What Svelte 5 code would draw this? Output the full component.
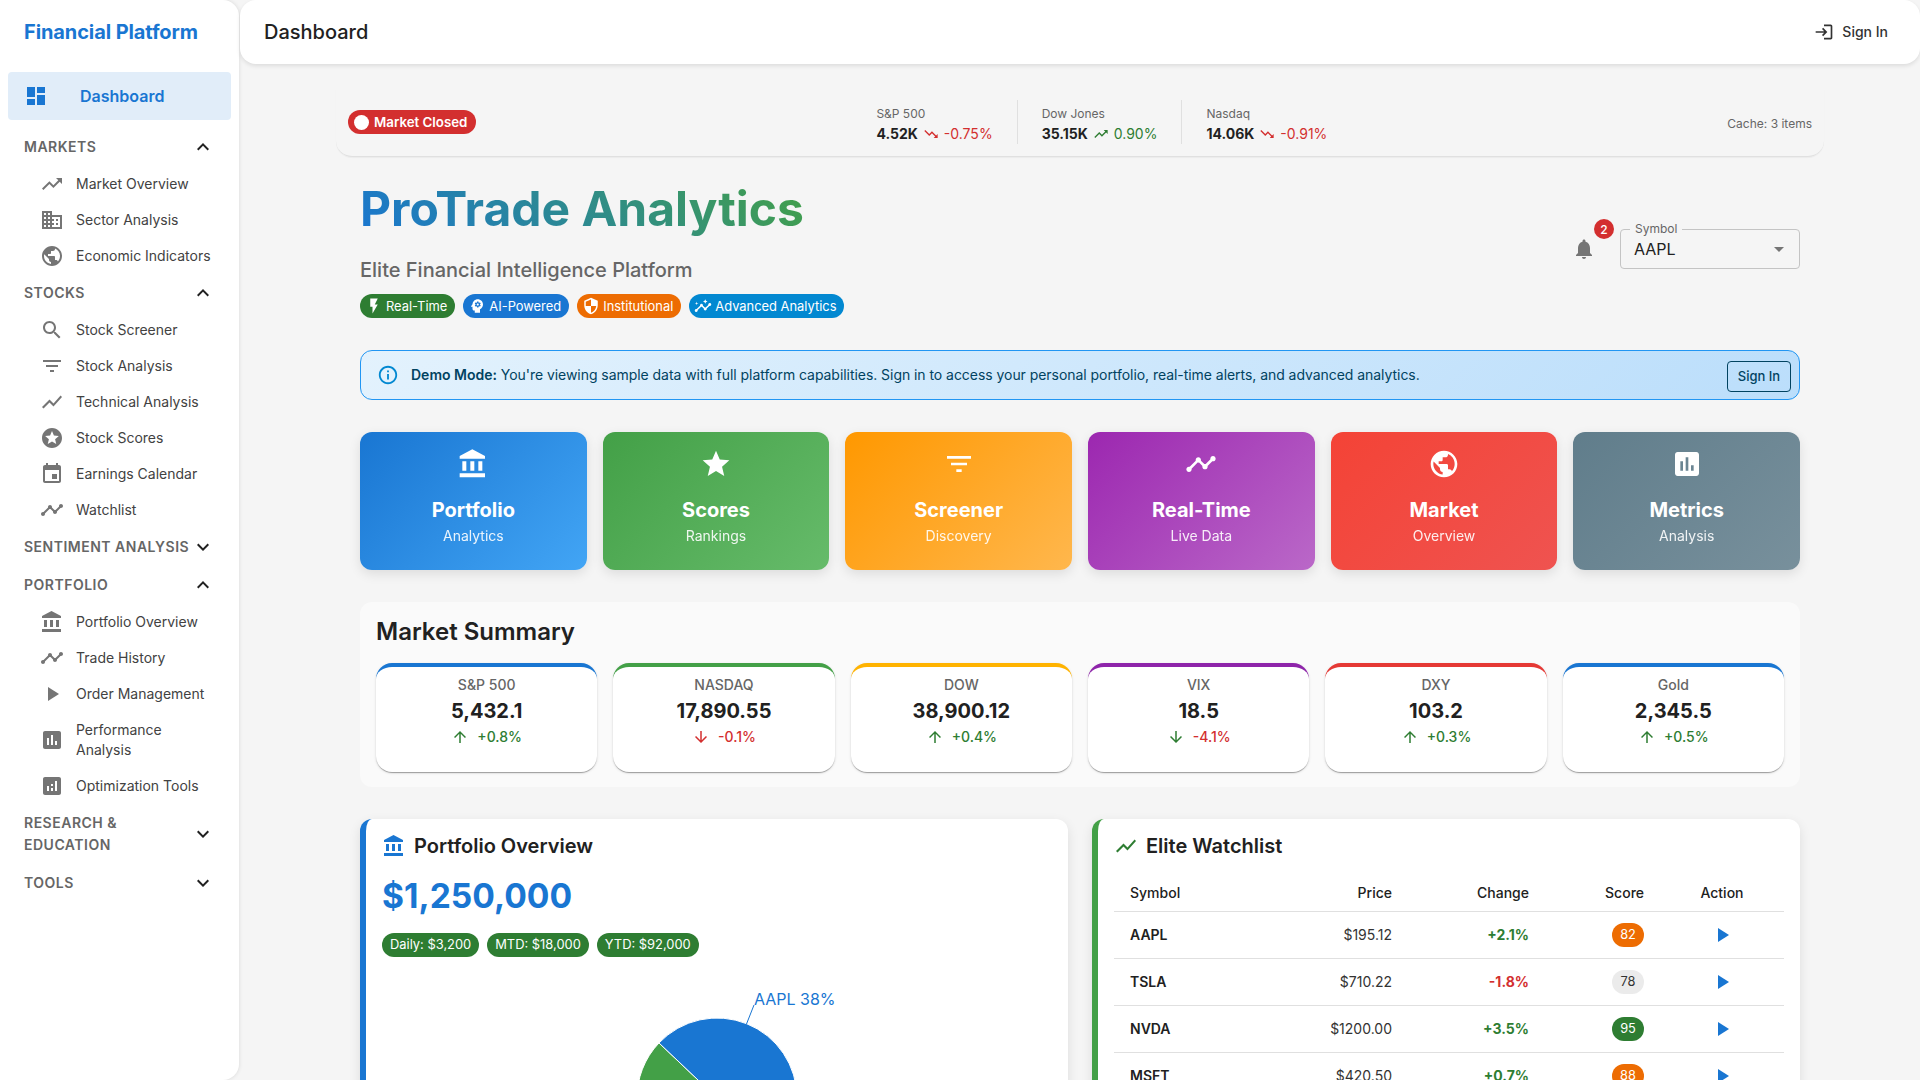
<script>
const P = {
  dashboard: 'M3 13h8V3H3v10zm0 8h8v-6H3v6zm10 0h8V11h-8v10zm0-18v6h8V3h-8z',
  up: 'M16 6l2.29 2.29-4.88 4.88-4-4L2 16.59 3.41 18l6-6 4 4 6.3-6.29L22 12V6z',
  down: 'M16 18l2.29-2.29-4.88-4.88-4 4L2 7.41 3.41 6l6 6 4-4 6.3 6.29L22 12v6z',
  business: 'M12 7V3H2v18h20V7H12zM6 19H4v-2h2v2zm0-4H4v-2h2v2zm0-4H4V9h2v2zm0-4H4V5h2v2zm4 12H8v-2h2v2zm0-4H8v-2h2v2zm0-4H8V9h2v2zm0-4H8V5h2v2zm10 12h-8v-2h2v-2h-2v-2h2v-2h-2V9h8v10zm-2-8h-2v2h2v-2zm0 4h-2v2h2v-2z',
  public: 'M12 2C6.48 2 2 6.48 2 12s4.48 10 10 10 10-4.48 10-10S17.52 2 12 2zm-1 17.93c-3.95-.49-7-3.85-7-7.93 0-.62.08-1.21.21-1.79L9 15v1c0 1.1.9 2 2 2v1.93zm6.9-2.54c-.26-.81-1-1.39-1.9-1.39h-1v-3c0-.55-.45-1-1-1H8v-2h2c.55 0 1-.45 1-1V7h2c1.1 0 2-.9 2-2v-.41c2.93 1.19 5 4.06 5 7.41 0 2.08-.8 3.97-2.1 5.39z',
  search: 'M15.5 14h-.79l-.28-.27C15.41 12.59 16 11.11 16 9.5 16 5.91 13.09 3 9.5 3S3 5.91 3 9.5 5.91 16 9.5 16c1.61 0 3.09-.59 4.23-1.57l.27.28v.79l5 4.99L20.49 19l-4.99-5zm-6 0C7.01 14 5 11.99 5 9.5S7.01 5 9.5 5 14 7.01 14 9.5 11.99 14 9.5 14z',
  filter: 'M10 18h4v-2h-4v2zM3 6v2h18V6H3zm3 7h12v-2H6v2z',
  chart: 'M3.5 18.49l6-6.01 4 4L22 6.92l-1.41-1.41-7.09 7.97-4-4L2 16.99z',
  stars: 'M11.99 2C6.47 2 2 6.48 2 12s4.47 10 9.99 10C17.52 22 22 17.52 22 12S17.52 2 11.99 2zm4.24 16L12 15.45 7.77 18l1.12-4.81-3.73-3.23 4.92-.42L12 5l1.92 4.53 4.92.42-3.73 3.23L16.23 18z',
  event: 'M17 12h-5v5h5v-5zM16 1v2H8V1H6v2H5c-1.11 0-1.99.9-1.99 2L3 19c0 1.1.89 2 2 2h14c1.1 0 2-.9 2-2V5c0-1.1-.9-2-2-2h-1V1h-2zm3 18H5V8h14v11z',
  timeline: 'M23 8c0 1.1-.9 2-2 2-.18 0-.35-.02-.51-.07l-3.56 3.55c.05.16.07.34.07.52 0 1.1-.9 2-2 2s-2-.9-2-2c0-.18.02-.36.07-.52l-2.55-2.55c-.16.05-.34.07-.52.07s-.36-.02-.52-.07l-4.55 4.56c.05.16.07.33.07.51 0 1.1-.9 2-2 2s-2-.9-2-2 .9-2 2-2c.18 0 .35.02.51.07l4.56-4.55C8.02 9.36 8 9.18 8 9c0-1.1.9-2 2-2s2 .9 2 2c0 .18-.02.36-.07.52l2.55 2.55c.16-.05.34-.07.52-.07s.36.02.52.07l3.55-3.56C19.02 8.35 19 8.18 19 8c0-1.1.9-2 2-2s2 .9 2 2z',
  bank: 'M4 10v7h3v-7H4zm6 0v7h3v-7h-3zM2 22h19v-3H2v3zm14-12v7h3v-7h-3zm-4.5-9L2 6v2h19V6l-9.5-5z',
  play: 'M8 5v14l11-7z',
  assess: 'M19 3H5c-1.1 0-2 .9-2 2v14c0 1.1.9 2 2 2h14c1.1 0 2-.9 2-2V5c0-1.1-.9-2-2-2zM9 17H7v-7h2v7zm4 0h-2V7h2v10zm4 0h-2v-4h2v4z',
  analytics: 'M19 3H5c-1.1 0-2 .9-2 2v14c0 1.1.9 2 2 2h14c1.1 0 2-.9 2-2V5c0-1.1-.9-2-2-2zM9 17H7v-5h2v5zm4 0h-2v-3h2v3zm0-5h-2v-2h2v2zm4 5h-2V7h2v10z',
  less: 'M12 8l-6 6 1.41 1.41L12 10.83l4.59 4.58L18 14z',
  more: 'M16.59 8.59L12 13.17 7.41 8.59 6 10l6 6 6-6z',
  login: 'M11 7L9.6 8.4l2.6 2.6H2v2h10.2l-2.6 2.6L11 17l5-5-5-5zm9 12h-8v2h8c1.1 0 2-.9 2-2V5c0-1.1-.9-2-2-2h-8v2h8v14z',
  bell: 'M12 22c1.1 0 2-.9 2-2h-4c0 1.1.89 2 2 2zm6-6v-5c0-3.07-1.64-5.64-4.5-6.32V4c0-.83-.67-1.5-1.5-1.5s-1.5.67-1.5 1.5v.68C7.63 5.36 6 7.92 6 11v5l-2 2v1h16v-1l-2-2z',
  bolt: 'M7 2v11h3v9l7-12h-4l4-8z',
  psych: 'M13 8.57c-.79 0-1.43.64-1.43 1.43s.64 1.43 1.43 1.43 1.43-.64 1.43-1.43-.64-1.43-1.43-1.43zM13 3C9.25 3 6.2 5.94 6.02 9.64L4.1 12.2c-.25.33-.01.8.4.8H6v3c0 1.1.9 2 2 2h1v3h7v-4.68c2.36-1.12 4-3.53 4-6.32 0-3.87-3.13-7-7-7zm3 7c0 .13-.01.26-.02.39l.83.66c.08.06.1.16.05.25l-.8 1.39c-.05.09-.16.12-.24.09l-.99-.4c-.21.16-.43.29-.67.39L14 13.83c-.01.1-.1.17-.2.17h-1.6c-.1 0-.18-.07-.2-.17l-.15-1.06c-.25-.1-.47-.23-.68-.39l-.99.4c-.09.03-.2 0-.25-.09l-.8-1.39c-.05-.08-.03-.19.05-.25l.84-.66c-.01-.13-.02-.26-.02-.39s.02-.27.04-.39l-.85-.66c-.08-.06-.1-.16-.05-.26l.8-1.38c.05-.09.15-.12.24-.09l1 .4c.2-.15.43-.29.67-.39L12 6.17c.02-.1.1-.17.2-.17h1.6c.1 0 .18.07.2.17l.15 1.06c.24.1.46.23.67.39l1-.4c.09-.03.2 0 .24.09l.8 1.38c.05.09.03.2-.05.26l-.85.66c.03.12.04.25.04.39z',
  shield: 'M12 1L3 5v6c0 5.55 3.84 10.74 9 12 5.16-1.26 9-6.45 9-12V5l-9-4zm0 10.99h7c-.53 4.12-3.28 7.79-7 8.94V12H5V6.3l7-3.11v8.8z',
  insights: 'M21 8c-1.45 0-2.26 1.44-1.93 2.51l-3.55 3.56c-.3-.09-.74-.09-1.04 0l-2.55-2.55C12.27 10.45 11.46 9 10 9c-1.45 0-2.27 1.44-1.93 2.52l-4.56 4.55C2.44 15.74 1 16.55 1 18c0 1.1.9 2 2 2 1.45 0 2.26-1.44 1.93-2.51l4.55-4.56c.3.09.74.09 1.04 0l2.55 2.55C12.73 16.55 13.54 18 15 18c1.45 0 2.27-1.44 1.93-2.52l3.56-3.55c1.07.33 2.51-.48 2.51-1.93 0-1.1-.9-2-2-2zM15 9l.94-2.07L18 6l-2.06-.93L15 3l-.92 2.07L12 6l2.08.93zM3.5 11 4 9l2-.5L4 8l-.5-2L3 8l-2 .5L3 9z',
  star: 'M12 17.27L18.18 21l-1.64-7.03L22 9.24l-7.19-.61L12 2 9.19 8.63 2 9.24l5.46 4.73L5.82 21z',
  info: 'M11 7h2v2h-2zm0 4h2v6h-2zm1-9C6.48 2 2 6.48 2 12s4.48 10 10 10 10-4.48 10-10S17.52 2 12 2zm0 18c-4.41 0-8-3.59-8-8s3.59-8 8-8 8 3.59 8 8-3.59 8-8 8z',
  arrowUp: 'M4 12l1.41 1.41L11 7.83V20h2V7.83l5.58 5.59L20 12l-8-8-8 8z',
  arrowDown: 'M20 12l-1.41-1.41L13 16.17V4h-2v12.17l-5.58-5.59L4 12l8 8 8-8z',
  drop: 'M7 10l5 5 5-5z'
};

const nav = [
  { title: 'MARKETS', open: true, items: [['up','Market Overview'],['business','Sector Analysis'],['public','Economic Indicators']] },
  { title: 'STOCKS', open: true, items: [['search','Stock Screener'],['filter','Stock Analysis'],['chart','Technical Analysis'],['stars','Stock Scores'],['event','Earnings Calendar'],['timeline','Watchlist']] },
  { title: 'SENTIMENT ANALYSIS', open: false, items: [] },
  { title: 'PORTFOLIO', open: true, items: [['bank','Portfolio Overview'],['timeline','Trade History'],['play','Order Management'],['assess','Performance Analysis'],['analytics','Optimization Tools']] },
  { title: 'RESEARCH & EDUCATION', open: false, items: [] },
  { title: 'TOOLS', open: false, items: [] }
];

const indices = [
  { name: 'S&P 500', value: '4.52K', icon: 'down', change: '-0.75%', cls: 'neg' },
  { name: 'Dow Jones', value: '35.15K', icon: 'up', change: '0.90%', cls: 'pos' },
  { name: 'Nasdaq', value: '14.06K', icon: 'down', change: '-0.91%', cls: 'neg' }
];

const tags = [
  { icon: 'bolt', label: 'Real-Time', cls: 'c-green' },
  { icon: 'psych', label: 'AI-Powered', cls: 'c-blue' },
  { icon: 'shield', label: 'Institutional', cls: 'c-orange' },
  { icon: 'insights', label: 'Advanced Analytics', cls: 'c-sky' }
];

const quick = [
  { icon: 'bank', title: 'Portfolio', sub: 'Analytics', cls: 'q-blue' },
  { icon: 'star', title: 'Scores', sub: 'Rankings', cls: 'q-green' },
  { icon: 'filter', title: 'Screener', sub: 'Discovery', cls: 'q-orange' },
  { icon: 'timeline', title: 'Real-Time', sub: 'Live Data', cls: 'q-purple' },
  { icon: 'public', title: 'Market', sub: 'Overview', cls: 'q-red' },
  { icon: 'assess', title: 'Metrics', sub: 'Analysis', cls: 'q-grey' }
];

const summary = [
  { name: 'S&P 500', value: '5,432.1', arrow: 'arrowUp', arrowCls: 'pos', change: '+0.8%', cls: 'pos', top: 't-blue' },
  { name: 'NASDAQ', value: '17,890.55', arrow: 'arrowDown', arrowCls: 'neg', change: '-0.1%', cls: 'neg', top: 't-green' },
  { name: 'DOW', value: '38,900.12', arrow: 'arrowUp', arrowCls: 'pos', change: '+0.4%', cls: 'pos', top: 't-amber' },
  { name: 'VIX', value: '18.5', arrow: 'arrowDown', arrowCls: 'pos', change: '-4.1%', cls: 'neg', top: 't-purple' },
  { name: 'DXY', value: '103.2', arrow: 'arrowUp', arrowCls: 'pos', change: '+0.3%', cls: 'pos', top: 't-red' },
  { name: 'Gold', value: '2,345.5', arrow: 'arrowUp', arrowCls: 'pos', change: '+0.5%', cls: 'pos', top: 't-blue' }
];

const watch = [
  { s: 'AAPL', p: '$195.12', c: '+2.1%', cls: 'pos', score: 82, sc: 's-orange' },
  { s: 'TSLA', p: '$710.22', c: '-1.8%', cls: 'neg', score: 78, sc: 's-grey' },
  { s: 'NVDA', p: '$1200.00', c: '+3.5%', cls: 'pos', score: 95, sc: 's-green' },
  { s: 'MSFT', p: '$420.50', c: '+0.7%', cls: 'pos', score: 88, sc: 's-orange' }
];

const pnl = ['Daily: $3,200', 'MTD: $18,000', 'YTD: $92,000'];

const cx = 335, cy = 125, r = 80;
function pt(deg) {
  const a = (deg * Math.PI) / 180;
  return `${(cx + r * Math.sin(a)).toFixed(2)} ${(cy - r * Math.cos(a)).toFixed(2)}`;
}
function slice(a, b) {
  const large = b - a > 180 ? 1 : 0;
  return `M${cx} ${cy} L${pt(a)} A${r} ${r} 0 ${large} 1 ${pt(b)} Z`;
}
const blue = slice(-46.5, 90.3);
const green = slice(-136, -46.5);
const amber = slice(90.3, 224);
</script>

{#snippet icon(name, size = 24, cls = '')}
  <svg class="ic {cls}" width={size} height={size} viewBox="0 0 24 24" aria-hidden="true"><path d={P[name]} /></svg>
{/snippet}

<div class="shell">
  <aside class="sidebar">
    <div class="brand">Financial Platform</div>
    <div class="active">
      <span class="active-icon">{@render icon('dashboard')}</span>
      <span>Dashboard</span>
    </div>
    {#each nav as group}
      <div class="group-head">
        <span class="group-title">{group.title}</span>
        <span class="chev">{@render icon(group.open ? 'less' : 'more')}</span>
      </div>
      {#each group.items as item}
        <div class="item">
          <span class="item-icon">{@render icon(item[0])}</span>
          <span class="item-text">{item[1]}</span>
        </div>
      {/each}
    {/each}
  </aside>

  <div class="right">
    <header class="appbar">
      <h1 class="page-title">Dashboard</h1>
      <div class="signin">{@render icon('login', 20)}<span>Sign In</span></div>
    </header>

    <main class="main">
      <div class="page">
        <section class="status">
          <div class="closed"><span class="dot"></span>Market Closed</div>
          <div class="indices">
            {#each indices as x}
              <div class="index">
                <div class="index-name">{x.name}</div>
                <div class="index-row">
                  <b>{x.value}</b>
                  <span class={x.cls}>{@render icon(x.icon, 16)}</span>
                  <span class={x.cls}>{x.change}</span>
                </div>
              </div>
            {/each}
          </div>
          <div class="cache">Cache: 3 items</div>
        </section>

        <section class="hero">
          <div class="hero-left">
            <h2 class="brand-title">ProTrade Analytics</h2>
            <div class="tagline">Elite Financial Intelligence Platform</div>
            <div class="tags">
              {#each tags as t}
                <span class="tag {t.cls}">{@render icon(t.icon, 18)}{t.label}</span>
              {/each}
            </div>
          </div>
          <div class="hero-right">
            <div class="bell">
              {@render icon('bell')}
              <span class="badge">2</span>
            </div>
            <div class="select">
              <span class="select-label">Symbol</span>
              <span>AAPL</span>
              {@render icon('drop')}
            </div>
          </div>
        </section>

        <section class="alert">
          <span class="alert-icon">{@render icon('info', 22)}</span>
          <div class="alert-text"><b>Demo Mode:</b> You're viewing sample data with full platform capabilities. Sign in to access your personal portfolio, real-time alerts, and advanced analytics.</div>
          <button class="alert-btn">Sign In</button>
        </section>

        <section class="quick">
          {#each quick as q}
            <div class="q {q.cls}">
              {@render icon(q.icon, 32)}
              <div class="q-title">{q.title}</div>
              <div class="q-sub">{q.sub}</div>
            </div>
          {/each}
        </section>

        <section class="summary">
          <h3>Market Summary</h3>
          <div class="summary-grid">
            {#each summary as m}
              <div class="m {m.top}">
                <div class="m-name">{m.name}</div>
                <div class="m-value">{m.value}</div>
                <div class="m-change">
                  <span class={m.arrowCls}>{@render icon(m.arrow, 18)}</span>
                  <span class={m.cls}>{m.change}</span>
                </div>
              </div>
            {/each}
          </div>
        </section>

        <section class="columns">
          <div class="card card-blue">
            <div class="card-head">
              <span class="blue-ic">{@render icon('bank')}</span>
              <h3>Portfolio Overview</h3>
            </div>
            <div class="total">$1,250,000</div>
            <div class="pnl">
              {#each pnl as p}<span class="pnl-chip">{p}</span>{/each}
            </div>
            <svg class="pie" width="670" height="300" viewBox="0 0 670 300">
              <path d={amber} fill="#ffb300" stroke="#fff" />
              <path d={green} fill="#43a047" stroke="#fff" />
              <path d={blue} fill="#1976d2" stroke="#fff" />
              <path d="M364.5 51 L372 32" fill="none" stroke="#1976d2" />
              <text x="372" y="32" class="pie-label">AAPL 38%</text>
            </svg>
          </div>

          <div class="card card-green">
            <div class="card-head">
              <span class="pos">{@render icon('chart')}</span>
              <h3>Elite Watchlist</h3>
            </div>
            <table>
              <thead>
                <tr>
                  <th class="col-sym">Symbol</th>
                  <th class="col-price">Price</th>
                  <th class="col-chg">Change</th>
                  <th class="col-score">Score</th>
                  <th class="col-act">Action</th>
                </tr>
              </thead>
              <tbody>
                {#each watch as w}
                  <tr>
                    <td class="col-sym sym">{w.s}</td>
                    <td class="col-price">{w.p}</td>
                    <td class="col-chg chg {w.cls}">{w.c}</td>
                    <td class="col-score"><span class="score {w.sc}">{w.score}</span></td>
                    <td class="col-act"><span class="act">{@render icon('play')}</span></td>
                  </tr>
                {/each}
              </tbody>
            </table>
          </div>
        </section>
      </div>
    </main>
  </div>
</div>

<style>
  :global(html), :global(body) { margin: 0; height: 100%; overflow: hidden; }
  :global(body) { background: #f5f5f5; font-family: Inter, "Liberation Sans", sans-serif; color: #212121; }
  h1, h2, h3 { margin: 0; }
  .ic { display: block; fill: currentColor; flex: none; }
  .pos { color: #2e7d32; }
  .neg { color: #d32f2f; }

  .shell { display: flex; height: 1080px; overflow: hidden; }
  .sidebar { width: 239px; flex: none; background: #fff; border-radius: 0 16px 16px 0; box-shadow: 0 0 4px rgba(0,0,0,.12); height: 100%; }
  .brand { height: 64px; display: flex; align-items: center; padding-left: 24px; font-size: 20px; font-weight: 700; letter-spacing: -.1px; color: #1976d2; }
  .active { margin: 8px 8px 8px; height: 48px; border-radius: 4px; background: #e1edf9; display: flex; align-items: center; padding-left: 16px; color: #1976d2; font-size: 16px; font-weight: 600; }
  .active-icon { width: 56px; }
  .group-head { display: flex; align-items: center; justify-content: space-between; padding: 8px 24px; }
  .group-title { font-size: 14px; line-height: 22px; font-weight: 600; letter-spacing: .5px; color: #666; }
  .chev { color: #212121; height: 22px; display: flex; align-items: center; flex: none; }
  .item { display: flex; align-items: center; padding: 8px 24px 8px 40px; color: #424242; font-size: 14px; line-height: 20px; }
  .item-icon { width: 36px; height: 20px; display: flex; align-items: center; flex: none; color: #757575; }

  .right { flex: 1; min-width: 0; padding-left: 1px; }
  .appbar { height: 64px; background: #fff; border-radius: 16px; box-shadow: 0 2px 4px rgba(0,0,0,.1); display: flex; align-items: center; justify-content: space-between; padding: 0 32px 0 24px; }
  .page-title { font-size: 20px; font-weight: 500; }
  .signin { display: flex; align-items: center; gap: 8px; font-size: 14px; line-height: 18px; font-weight: 500; color: #333; }
  .signin span { margin-top: -1px; }

  .main { height: 1016px; overflow: hidden; padding-top: 24px; box-sizing: border-box; }
  .page { width: 1440px; margin: 0 auto; }

  .status { margin: 0 -24px 23px; padding: 12px; border-bottom: 1px solid #e0e0e0; border-radius: 0 0 16px 16px; display: flex; align-items: center; justify-content: space-between; box-shadow: 0 1px 1px rgba(0,0,0,.04); }
  .closed { height: 24px; padding: 0 9px 0 6px; border-radius: 12px; background: #d32f2f; color: #fff; display: flex; align-items: center; gap: 5px; font-size: 13.3px; font-weight: 600; }
  .dot { width: 15px; height: 15px; border-radius: 50%; background: #fff; }
  .indices { display: flex; }
  .index { padding: 0 24px; border-left: 1px solid #e0e0e0; height: 44px; box-sizing: border-box; }
  .index:first-child { border-left: 0; padding-left: 0; }
  .index:last-child { padding-right: 0; }
  .index-name { font-size: 12px; line-height: 20px; margin-top: 4px; color: #666; }
  .index-row { display: flex; align-items: center; gap: 5px; font-size: 14px; line-height: 20px; }
  .index-row b { font-weight: 700; }
  .cache { font-size: 12px; color: #666; margin-top: 3px; }

  .hero { display: flex; justify-content: space-between; align-items: center; margin-bottom: 32px; }
  .brand-title { font-size: 48px; line-height: 58px; font-weight: 700; background: linear-gradient(45deg, #1976d2, #43a047); -webkit-background-clip: text; background-clip: text; color: transparent; width: fit-content; }
  .tagline { margin-top: 16px; font-size: 20px; line-height: 32px; color: #666; font-weight: 500; }
  .tags { display: flex; gap: 8px; margin-top: 8px; }
  .tag { height: 24px; box-sizing: border-box; border-radius: 12px; display: flex; align-items: center; gap: 3px; padding: 0 8px 0 5px; color: #fff; font-size: 12.9px; font-weight: 400; }
  .c-green { background: #2e7d32; }
  .c-blue { background: #1976d2; }
  .c-orange { background: #ed6c02; }
  .c-sky { background: #0288d1; }
  .hero-right { display: flex; align-items: center; gap: 24px; }
  .bell { position: relative; color: #757575; }
  .badge { position: absolute; left: 22px; top: -18px; width: 20px; height: 20px; border-radius: 50%; background: #d32f2f; color: #fff; font-size: 12px; font-weight: 500; display: flex; align-items: center; justify-content: center; }
  .select { position: relative; width: 180px; height: 40px; box-sizing: border-box; border: 1px solid #c4c4c4; border-radius: 4px; display: flex; align-items: center; justify-content: space-between; padding: 0 8px 0 13px; font-size: 16px; color: #212121; }
  .select .ic { color: #757575; }
  .select-label { position: absolute; left: 9px; top: -8px; padding: 0 5px; background: #f5f5f5; font-size: 12px; line-height: 14px; color: #666; }

  .alert { height: 50px; box-sizing: border-box; border: 1px solid #2196f3; border-radius: 12px; background: linear-gradient(135deg, #e3f2fd, #bbdefb); display: flex; align-items: center; padding: 0 8px 0 16px; color: #014361; margin-bottom: 32px; }
  .alert-icon { color: #0288d1; margin-right: 12px; }
  .alert-text { flex: 1; font-size: 14px; letter-spacing: -0.05px; margin-top: -2px; }
  .alert-text b { font-weight: 600; letter-spacing: 0; }
  .alert-btn { height: 31px; width: 64px; margin-top: 2px; border: 1px solid #014361; border-radius: 4px; background: transparent; color: #014361; font: 500 13px Inter, sans-serif; padding: 0; }

  .quick { display: grid; grid-template-columns: repeat(6, 1fr); gap: 16px; margin-bottom: 32px; }
  .q { height: 138px; box-sizing: border-box; padding-top: 16px; border-radius: 12px; color: #fff; display: flex; flex-direction: column; align-items: center; box-shadow: 0 4px 12px rgba(0,0,0,.1); }
  .q-title { margin-top: 14px; font-size: 20px; line-height: 32px; font-weight: 700; }
  .q-sub { font-size: 14px; line-height: 20px; opacity: .9; }
  .q-blue { background: linear-gradient(135deg, #1976d2, #42a5f5); }
  .q-green { background: linear-gradient(135deg, #43a047, #66bb6a); }
  .q-orange { background: linear-gradient(135deg, #ff9800, #ffb74d); }
  .q-purple { background: linear-gradient(135deg, #9c27b0, #ba68c8); }
  .q-red { background: linear-gradient(135deg, #f44336, #ef5350); }
  .q-grey { background: linear-gradient(135deg, #607d8b, #78909c); }

  .summary { background: #fafafa; border-radius: 12px; padding: 16px; height: 185px; box-sizing: border-box; margin-bottom: 32px; }
  .summary h3 { font-size: 24px; line-height: 28px; font-weight: 600; margin-bottom: 17px; }
  .summary-grid { display: grid; grid-template-columns: repeat(6, 1fr); gap: 16px; }
  .m { height: 109px; box-sizing: border-box; background: #fff; border-top: 4px solid; border-radius: 16px; box-shadow: 0 2px 1px -1px rgba(0,0,0,.2), 0 1px 1px rgba(0,0,0,.14), 0 1px 3px rgba(0,0,0,.12); text-align: center; padding-top: 8px; }
  .t-blue { border-color: #1976d2; }
  .t-green { border-color: #43a047; }
  .t-amber { border-color: #ffb300; }
  .t-purple { border-color: #8e24aa; }
  .t-red { border-color: #e53935; }
  .m-name { font-size: 14px; line-height: 20px; color: #666; font-weight: 500; }
  .m-value { font-size: 20px; line-height: 32px; font-weight: 700; }
  .m-change { display: flex; align-items: center; justify-content: center; gap: 8px; font-size: 14px; line-height: 20px; font-weight: 500; }

  .columns { display: grid; grid-template-columns: 708px 708px; gap: 24px; }
  .card { background: #fff; border-radius: 12px; border-left: 6px solid; box-shadow: 0 4px 12px rgba(0,0,0,.1); padding: 12px 16px; height: 400px; box-sizing: border-box; }
  .card-blue { border-color: #1976d2; }
  .card-green { border-color: #43a047; }
  .blue-ic { color: #1976d2; }
  .card-head { display: flex; align-items: center; gap: 8px; height: 30px; }
  .card-head h3 { font-size: 20px; font-weight: 600; }
  .total { margin-top: 10px; font-size: 33.6px; line-height: 50px; font-weight: 700; color: #1976d2; }
  .pnl { display: flex; gap: 8px; margin-top: 12px; }
  .pnl-chip { height: 24px; border-radius: 12px; background: #2e7d32; color: #fff; font-size: 12.9px; line-height: 24px; padding: 0 8px; }
  .pie { display: block; margin-top: 16px; }
  .pie-label { font: 400 16px Inter, sans-serif; fill: #1976d2; }

  table { width: 670px; margin-top: 13px; border-collapse: collapse; table-layout: fixed; font-size: 14px; }
  th { height: 37px; font-weight: 500; border-bottom: 1px solid #e0e0e0; padding: 0 16px; box-sizing: border-box; }
  td { height: 47px; border-bottom: 1px solid #e0e0e0; padding: 0 16px; box-sizing: border-box; color: #333; }
  .col-sym { width: 147px; text-align: left; }
  .col-price { width: 147px; text-align: right; }
  .col-chg { width: 137px; text-align: right; }
  .col-score { width: 115px; text-align: right; }
  .col-act { width: 124px; text-align: center; }
  .sym { font-weight: 600; color: #212121; }
  .chg { font-weight: 700; }
  .chg.pos { color: #2e7d32; }
  .chg.neg { color: #d32f2f; }
  .score { display: inline-block; width: 32px; height: 24px; line-height: 24px; border-radius: 12px; text-align: center; font-size: 12.8px; vertical-align: middle; }
  .s-orange { background: #ed6c02; color: #fff; }
  .s-grey { background: #ebebeb; color: #333; }
  .s-green { background: #2e7d32; color: #fff; }
  .act { display: flex; justify-content: center; color: #1976d2; }
</style>
